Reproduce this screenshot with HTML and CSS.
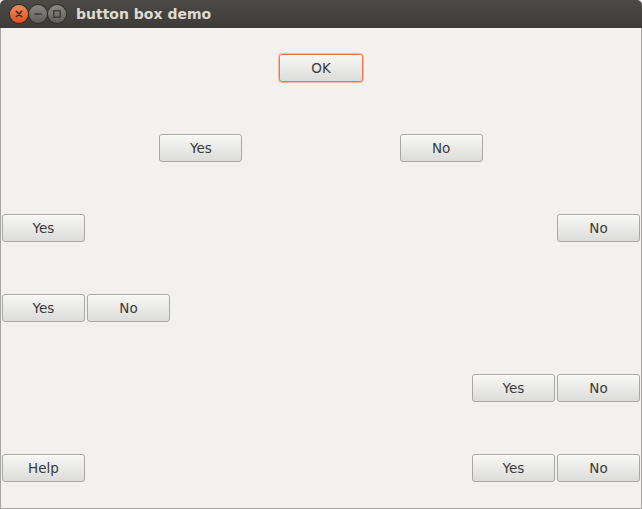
FILE: index.html
```html
<!DOCTYPE html>
<html lang="en">
<head>
    <meta charset="UTF-8">
    <title>button box demo</title>
    <link rel="stylesheet" href="styles.css">
</head>
<body>

    <div class="window">
        <!-- Title bar -->
        <div class="titlebar">
            <div class="controls">
                <span class="ctl close">
                    <svg width="18" height="18" viewBox="0 0 18 18"><path d="M6.3 6.3 L11.7 11.7 M11.7 6.3 L6.3 11.7" stroke="#3a2a22" stroke-width="1.6" stroke-linecap="round"/></svg>
                </span>
                <span class="ctl">
                    <svg width="18" height="18" viewBox="0 0 18 18"><path d="M5.5 9 H12.5" stroke="#3c3b37" stroke-width="1.6"/></svg>
                </span>
                <span class="ctl">
                    <svg width="18" height="18" viewBox="0 0 18 18"><rect x="5.8" y="5.8" width="6.4" height="6.4" fill="none" stroke="#3c3b37" stroke-width="1.4"/></svg>
                </span>
            </div>
            <span class="title">button box demo</span>
        </div>

        <div class="content">
            <div class="row center">
                <button class="btn default">OK</button>
            </div>

            <div class="row spread">
                <button class="btn">Yes</button>
                <button class="btn">No</button>
            </div>

            <div class="row edge">
                <button class="btn">Yes</button>
                <button class="btn">No</button>
            </div>

            <div class="row start">
                <button class="btn">Yes</button>
                <button class="btn">No</button>
            </div>

            <div class="row end">
                <button class="btn">Yes</button>
                <button class="btn">No</button>
            </div>

            <div class="row edge">
                <button class="btn">Help</button>
                <div class="group">
                    <button class="btn">Yes</button>
                    <button class="btn">No</button>
                </div>
            </div>
        </div>
    </div>

</body>
</html>
```

FILE: styles.css
```css
* {
    margin: 0;
    padding: 0;
    box-sizing: border-box;
}

body {
    width: 642px;
    height: 509px;
    background: #f2f1f0;
    font-family: 'DejaVu Sans', 'Liberation Sans', sans-serif;
    overflow: hidden;
}

.window {
    width: 642px;
    height: 509px;
    display: flex;
    flex-direction: column;
}

/* Dark Ubuntu style title bar */
.titlebar {
    height: 28px;
    flex-shrink: 0;
    background: linear-gradient(to bottom, #4b4a45, #3d3c38);
    border-radius: 5px 5px 0 0;
    display: flex;
    align-items: center;
    padding-left: 10px;
    padding-bottom: 1px;
}

.controls {
    display: flex;
    gap: 1px;
}

.ctl {
    width: 18px;
    height: 18px;
    border-radius: 50%;
    background: linear-gradient(to bottom, #8a8984, #5f5e5a);
    box-shadow: 0 0 0 1px #2f2e2b;
    display: flex;
}

.ctl.close {
    background: linear-gradient(to bottom, #f58a5c, #e0501d);
}

.title {
    margin-left: 10px;
    color: #dfdbd2;
    font-size: 14px;
    font-weight: bold;
}

.content {
    flex: 1;
    border: 1px solid #a6a5a1;
    border-top: none;
    padding: 0 1px;
    display: flex;
    flex-direction: column;
}

.row {
    height: 80px;
    display: flex;
    align-items: center;
}

.row.center { justify-content: center; }
.row.spread { justify-content: space-evenly; }
.row.edge { justify-content: space-between; }
.row.start { justify-content: flex-start; gap: 2px; }
.row.end { justify-content: flex-end; gap: 2px; }

.group {
    display: flex;
    gap: 2px;
}

.btn {
    width: 83px;
    height: 28px;
    border: 1px solid #a9a8a4;
    border-radius: 3px;
    background: linear-gradient(to bottom, #f7f7f6, #dcdcda);
    box-shadow: inset 0 1px 0 #ffffff;
    color: #3a3a3a;
    font-family: 'DejaVu Sans', 'Liberation Sans', sans-serif;
    font-size: 13.5px;
}

.btn.default {
    width: 84px;
    border-color: #e9794d;
    box-shadow: 0 0 0 1px #f4b9a0, inset 0 1px 0 #ffffff;
}
```
